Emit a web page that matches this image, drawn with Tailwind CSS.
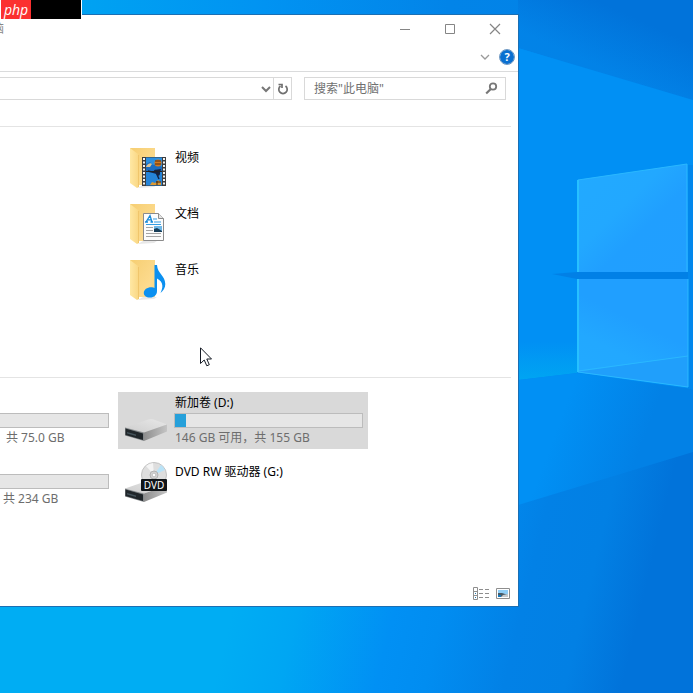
<!DOCTYPE html>
<html lang="zh-CN">
<head>
<meta charset="utf-8">
<meta name="viewport" content="width=device-width, initial-scale=1">
<title>此电脑</title>
<script src="https://cdn.jsdelivr.net/npm/@tailwindcss/browser@4"></script>
</head>
<body class="font-['Noto_Sans','Noto_Sans_CJK_SC',sans-serif] text-xs text-black">
<main class="relative isolate flex min-h-screen overflow-hidden pt-[14px] pr-[174px] pb-[86px]">

  <!-- Wallpaper -->
  <svg class="absolute inset-0 -z-10 h-full w-full" viewBox="0 0 693 693" preserveAspectRatio="xMaxYMin slice" aria-hidden="true">
    <defs>
      <linearGradient id="base" gradientUnits="userSpaceOnUse" x1="225" y1="640" x2="640" y2="740">
        <stop offset="0" stop-color="#00adf3"/><stop offset=".15" stop-color="#00a6f3"/><stop offset=".37" stop-color="#0190f4"/><stop offset=".48" stop-color="#018df1"/><stop offset=".66" stop-color="#0281e6"/><stop offset=".8" stop-color="#0280e4"/><stop offset=".93" stop-color="#0173da"/><stop offset="1" stop-color="#0173da"/>
      </linearGradient>
      <linearGradient id="sky" gradientUnits="userSpaceOnUse" x1="82" y1="0" x2="693" y2="0">
        <stop offset="0" stop-color="#00a2f2"/><stop offset=".3" stop-color="#0193f2"/><stop offset=".6" stop-color="#0284e8"/><stop offset="1" stop-color="#0281e6"/>
      </linearGradient>
      <linearGradient id="dark" gradientUnits="userSpaceOnUse" x1="585" y1="60" x2="612" y2="0">
        <stop offset="0" stop-color="#0173da" stop-opacity="0"/><stop offset=".9" stop-color="#0173da"/>
      </linearGradient>
      <linearGradient id="low" gradientUnits="userSpaceOnUse" x1="560" y1="420" x2="640" y2="450">
        <stop offset="0" stop-color="#0190f4"/><stop offset="1" stop-color="#0281e6"/>
      </linearGradient>
      <linearGradient id="glow" x1="0" y1="0" x2="0" y2="1">
        <stop offset="0" stop-color="#0190f4"/><stop offset="1" stop-color="#00a5f2"/>
      </linearGradient>
      <linearGradient id="pane" x1="0" y1="0" x2="1" y2="1">
        <stop offset="0" stop-color="#22aaff"/><stop offset=".4" stop-color="#22a8ff"/><stop offset=".6" stop-color="#209fff"/><stop offset="1" stop-color="#219fff"/>
      </linearGradient>
      <linearGradient id="pane2" x1="0" y1="1" x2=".5" y2="0">
        <stop offset="0" stop-color="#22aaff"/><stop offset=".4" stop-color="#22a8ff"/><stop offset=".7" stop-color="#209fff"/>
      </linearGradient>
    </defs>
    <rect width="693" height="693" fill="url(#base)"/>
    <path d="M0 0H693V102L518 48V30H0Z" fill="url(#sky)"/>
    <path d="M518 0H693V102L518 48Z" fill="url(#dark)"/>
    <path d="M518 48L693 100V390L577 373L518 380Z" fill="#0190f4"/>
    <path d="M518 342H577V373L518 380Z" fill="url(#glow)"/>
    <path d="M518 380L577 373L693 389V452L518 505Z" fill="url(#low)"/>
    <path d="M552 274L577 272H693V279H577Z" fill="#0180e6"/>
    <path d="M688 165H693V390L688 388Z" fill="#0187ec"/>
    <path d="M577 180L687 164L688 272H577Z" fill="url(#pane)"/>
    <path d="M577 279H688V387L577 372Z" fill="url(#pane2)"/>
    <path d="M577 372L688 356V387Z" fill="#209ffb"/>
    <path d="M578 272V180L687 164V272M578 279V371L688 356M578 372L688 387V279" fill="none" stroke="#2ab8ff" stroke-width="1"/>
    <path d="M578 180V272M578 279V372" stroke="#27c0ff" stroke-width="2"/>
  </svg>

  <!-- Shared icon shapes -->
  <svg class="absolute h-0 w-0" aria-hidden="true">
    <defs>
      <linearGradient id="fb" x1="0" y1="0" x2="1" y2="1"><stop offset="0" stop-color="#f6ce72"/><stop offset="1" stop-color="#ffe09a"/></linearGradient>
      <linearGradient id="ff" x1="0" y1="0" x2="1" y2="0"><stop offset="0" stop-color="#ffe8a4"/><stop offset="1" stop-color="#f9d682"/></linearGradient>
      <linearGradient id="dt" x1="0" y1="1" x2="1" y2="0"><stop offset="0" stop-color="#cdcdcd"/><stop offset="1" stop-color="#e8e8e8"/></linearGradient>
      <linearGradient id="ds" x1="0" y1="0" x2="1" y2="0"><stop offset="0" stop-color="#8e8e8e"/><stop offset="1" stop-color="#c4c4c4"/></linearGradient>
      <symbol id="folder" viewBox="0 0 48 48">
        <path d="M14 44L19 41H33L30 43Z" fill="#e8e8e8"/>
        <path d="M6 4H31V41H12Z" fill="url(#fb)"/>
        <path d="M27 16H31V41H27Z" fill="#fddb8a"/>
        <path d="M6 4L14 10Q15 11 15 13V43L13 44L6 39Z" fill="url(#ff)"/>
        <path d="M14.500 11V43" stroke="#e9bb5c" stroke-width=".6"/>
      </symbol>
      <symbol id="drive" viewBox="0 0 48 48">
        <path d="M1 30.500L25 22.300Q27 21.600 29 22.300L43 27.500L20 35.500Z" fill="url(#dt)"/>
        <path d="M20 35.500L43 27.500V34.500L20 44Z" fill="url(#ds)"/>
        <path d="M1 30.500L20 35.500V44L1 38.500Z" fill="#84888a"/>
        <path d="M1.500 31.500L19 36.500V43L1.500 38Z" fill="#20262a"/>
        <path d="M3 35L12 37.500V39L3 36.500Z" fill="#44525a"/>
      </symbol>
    </defs>
  </svg>

  <section class="flex min-w-0 flex-1 flex-col overflow-hidden border-y border-r border-[#1b6fb3] bg-white" aria-label="此电脑">
    <header class="flex h-7 items-center justify-between">
      <h1 class="-ml-2 text-[#888]">脑</h1>
      <div class="flex text-[#858585]">
        <button class="flex h-7 w-[45px] items-center justify-center" aria-label="最小化"><svg width="12" height="12" stroke="currentColor"><path d="M1 6.500H11"/></svg></button>
        <button class="flex h-7 w-[45px] items-center justify-center" aria-label="最大化"><svg width="12" height="12" fill="none" stroke="currentColor"><path d="M1.500 1.500H10.500V10.500H1.500Z"/></svg></button>
        <button class="flex h-7 w-[46px] items-center justify-center" aria-label="关闭"><svg width="12" height="12" fill="none" stroke="currentColor" stroke-width="1.200"><path d="M1 1L11 11M11 1L1 11"/></svg></button>
      </div>
    </header>

    <div class="flex h-[29px] items-center justify-end gap-[10px] border-b border-[#dadbdc] pr-1">
      <button aria-label="展开功能区"><svg class="block" width="10" height="8" fill="none" stroke="#9a9a9a" stroke-width="1.300"><path d="M1 2L5 6L9 2"/></svg></button>
      <button class="flex size-[14px] items-center justify-center rounded-full bg-[#0a6fd0] text-[11px] leading-[14px] font-bold text-white outline outline-[#0b5299]/60" aria-label="帮助">?</button>
    </div>

    <div class="flex gap-3 pt-[5px] pr-3">
      <div class="flex h-[23px] flex-1 border-y border-r border-[#d9d9d9]">
        <span class="flex-1"></span>
        <button class="px-[2px]" aria-label="以前的位置"><svg class="block" width="10" height="8" fill="none" stroke="#777" stroke-width="2"><path d="M1 2L5 6L9 2"/></svg></button>
        <button class="flex w-[18px] items-center justify-center border-l border-[#d9d9d9]" aria-label="刷新"><svg width="12" height="12" fill="none" stroke="#707070" stroke-width="1.700"><path d="M8.500 3A4.200 4.200 0 1 1 3.500 3"/><path d="M1.500 1.500H5V5"/></svg></button>
      </div>
      <label class="flex h-[23px] w-[202px] items-center border border-[#d9d9d9] pr-[7px] pl-[9px]">
        <input type="search" aria-label="搜索此电脑" placeholder="搜索&quot;此电脑&quot;" class="min-w-0 flex-1 outline-none placeholder:text-[#707070]">
        <svg width="13" height="13" fill="none" stroke="#777"><circle cx="8" cy="4.500" r="3.200" stroke-width="1.800"/><path d="M5.800 7L1.200 11.500" stroke-width="2.200"/></svg>
      </label>
    </div>

    <div class="mt-[26px] mr-[7px] border-t border-[#e4e4e4] pt-[13px]">
      <ul class="ml-[118px]">
        <li class="flex h-14 gap-[3px] pt-1 pl-[6px]">
          <svg class="size-12 shrink-0" viewBox="0 0 48 48" aria-hidden="true">
            <use href="#folder"/>
            <path d="M18 13H42V42H18Z" fill="#3d3d3d"/>
            <path d="M22 13.500H38V27H22Z" fill="#2b8fe0"/>
            <path d="M22 28H38V41.500H22Z" fill="#2584d8"/>
            <path d="M22 20L26 18L29 21L33 20L38 23V27H22Z" fill="#1b6cc0"/>
            <path d="M23 21Q26 18 28 20L26 23H22Z" fill="#d9c49a"/>
            <circle cx="34" cy="19" r="3.500" fill="#d67a1c"/><path d="M31 17L37 17M31 20H37" stroke="#532c16" stroke-width="1.200"/>
            <path d="M30 26L37 25L35 32L32 30Z" fill="#17223c"/>
            <path d="M24 27L36 30M31 26L35 35" stroke="#142343" stroke-width="1.500"/>
            <path d="M26 41L28 38L31 39L34 36L37 38V41Z" fill="#dc9a34"/><path d="M32 38H37M33 41V37" stroke="#412617"/>
            <path d="M20 14V42M40 14V42" stroke="#f2f2f2" stroke-width="2" stroke-dasharray="2 1.500"/>
            <path d="M22 27.500H38" stroke="#222"/>
          </svg>
          <span class="pt-[5px] leading-[18px]">视频</span>
        </li>
        <li class="flex h-14 gap-[3px] pt-1 pl-[6px]">
          <svg class="size-12 shrink-0" viewBox="0 0 48 48" aria-hidden="true">
            <use href="#folder"/>
            <path d="M19.500 13.500H34.500L39.500 18.500V40.500H19.500Z" fill="#fcfcfc" stroke="#8b8b8b"/>
            <path d="M34.500 13.500V18.500H39.500" fill="#e5e5e5" stroke="#8b8b8b"/>
            <path d="M22 22L26 15.500L28 22M23.500 19.800H27.300M21 22H24M26.500 22H29" fill="none" stroke="#1689d8" stroke-width="1.300"/>
            <path d="M29 19H33M30 22H37M22 24.500H37" stroke="#329de3"/>
            <path d="M22 27.500H29M22 30.500H29M22 33.500H37M22 36.500H37" stroke="#a5a5a5"/>
            <path d="M30 26H38V32H30Z" fill="#6fb8e8"/><path d="M30 29L33 28L38 31V32H30Z" fill="#183e59"/>
          </svg>
          <span class="pt-[5px] leading-[18px]">文档</span>
        </li>
        <li class="flex h-14 gap-[3px] pt-1 pl-[6px]">
          <svg class="size-12 shrink-0" viewBox="0 0 48 48" aria-hidden="true">
            <use href="#folder"/>
            <path d="M30.500 9H33C33.500 18 41 19 41.300 28C41.400 32 39 35 36.500 37C39 32 40 26 33 22.500V35C33 39 30 41.500 26 41.500C22 41.500 19.800 39.500 19.800 37C19.800 33.500 23.500 31 28 31.300Q29.500 31.400 30.500 32Z" fill="#0b90f0"/>
          </svg>
          <span class="pt-[5px] leading-[18px]">音乐</span>
        </li>
      </ul>
    </div>

    <div class="mt-[69px] mr-[7px] border-t border-[#e4e4e4] pt-[14px]">
      <ul class="grid grid-cols-[109px_250px] gap-x-[9px] gap-y-1 leading-[18px]">
        <li class="pt-[21px]">
          <div class="h-[15px] border-y border-r border-[#bcbcbc] bg-[#e6e6e6]"></div>
          <p class="pt-px pl-[6px] text-[#6d6d6d]">共 75.0 GB</p>
        </li>
        <li class="flex h-[57px] gap-[2px] bg-[#d9d9d9] pt-[2px] pr-[5px] pl-[6px]">
          <svg class="mt-[3px] size-12 shrink-0" aria-hidden="true"><use href="#drive"/></svg>
          <div class="flex-1">
            <p class="pl-px">新加卷 (D:)</p>
            <div class="mt-px h-[15px] border border-[#bcbcbc] bg-[#e6e6e6]"><div class="h-full bg-[#26a0da]" style="width:6%"></div></div>
            <p class="pt-px pl-px text-[#6d6d6d]">146 GB 可用，共 155 GB</p>
          </div>
        </li>
        <li class="pt-[21px]">
          <div class="h-[15px] border-y border-r border-[#bcbcbc] bg-[#e6e6e6]"></div>
          <p class="pt-px pl-[3px] text-[#6d6d6d]">共 234 GB</p>
        </li>
        <li class="flex h-[57px] gap-[3px] pt-[2px] pl-[6px]">
          <svg class="mt-[3px] size-12 shrink-0" viewBox="0 0 48 48" aria-hidden="true">
            <use href="#drive"/>
            <circle cx="30" cy="17" r="12.500" fill="#dedede" stroke="#c2c2c2"/>
            <path d="M30 17L37 7A12 12 0 0 1 41 12Z" fill="#b9e3f8"/>
            <path d="M30 17L22 8A12 12 0 0 1 29 5Z" fill="#f4f4f4"/>
            <circle cx="30" cy="17" r="4" fill="#d2d2d2" stroke="#b2b2b2"/><circle cx="30" cy="17" r="1.800" fill="#fff" stroke="#aaa" stroke-width=".6"/>
            <rect x="17" y="21" width="26" height="12" rx="1" fill="#111518"/>
            <text x="30" y="31" text-anchor="middle" font-size="10" fill="#fff">DVD</text>
          </svg>
          <p class="pt-2">DVD RW 驱动器 (G:)</p>
        </li>
      </ul>
    </div>

    <footer class="mt-auto flex justify-end gap-[6px] pr-2 pb-[6px]">
      <button aria-label="详细信息"><svg class="block" width="17" height="14" fill="none" stroke="#8e8e8e"><path d="M.5 1.500H4.500V13.500H.5ZM.5 5.500H4.500M.5 9.500H4.500"/><path d="M6 3.500H10M12 3.500H16M6 7.500H10M12 7.500H16M6 11.500H10M12 11.500H16"/><path d="M2 7.500H3M2 11.500H3" stroke="#237bb0"/></svg></button>
      <button aria-label="大图标"><svg class="block" width="14" height="14"><path d="M.5 2.500H13.500V12.500H.5Z" fill="#fff" stroke="#8e8e8e"/><path d="M2 4H12V11H2Z" fill="#8fcef6"/><path d="M2 7L6 7L12 9V11H2Z" fill="#485b67"/><path d="M7 9L12 8V11H5Z" fill="#c4c9cc"/><path d="M2 9H5V11H2Z" fill="#1678bd"/></svg></button>
    </footer>
  </section>

  <!-- Badge over the window corner -->
  <div class="absolute top-0 left-0 flex h-[19px] w-[82px] border-x border-white bg-black">
    <span class="flex w-[30px] items-center justify-center bg-[#fb3030] font-['Open_Sans',sans-serif] text-sm leading-[16px] text-white italic">php</span>
  </div>

  <!-- Mouse pointer -->
  <svg class="absolute top-[347px] left-[200px]" width="13" height="20" aria-hidden="true"><path d="M.5 .8V16.500L4.200 13L6.800 18.800L9.300 17.700L6.800 12H11.500Z" fill="#fff" stroke="#151a24"/></svg>
</main>
</body>
</html>
